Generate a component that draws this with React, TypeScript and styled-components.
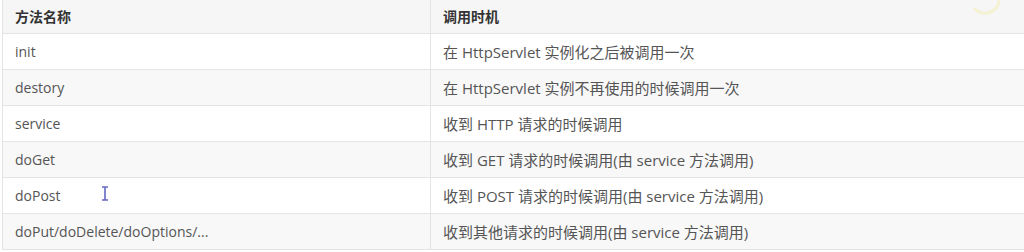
import React from 'react';
import styled, { createGlobalStyle } from 'styled-components';

const GlobalStyle = createGlobalStyle`
  html, body {
    margin: 0;
    padding: 0;
    background: #ffffff;
    overflow: hidden;
  }
`;

const rows = [
  { name: 'init', when: '在 HttpServlet 实例化之后被调用一次' },
  { name: 'destory', when: '在 HttpServlet 实例不再使用的时候调用一次' },
  { name: 'service', when: '收到 HTTP 请求的时候调用' },
  { name: 'doGet', when: '收到 GET 请求的时候调用(由 service 方法调用)' },
  { name: 'doPost', when: '收到 POST 请求的时候调用(由 service 方法调用)' },
  { name: 'doPut/doDelete/doOptions/...', when: '收到其他请求的时候调用(由 service 方法调用)' },
];

const Page = styled.div`
  position: relative;
  width: 1024px;
  height: 252px;
  overflow: hidden;
  padding-left: 2px;
  box-sizing: border-box;
  font-family: "Open Sans", "Noto Sans", "Noto Sans CJK SC", sans-serif;
`;

const Table = styled.table`
  width: 1040px;
  border-collapse: collapse;
  table-layout: fixed;
  font-size: 14px;
  color: #555555;
`;

const HeadCell = styled.th`
  height: 33px;
  padding: 0 12px;
  text-align: left;
  font-weight: 700;
  color: #333333;
  background: #f6f6f6;
  border: 1px solid #e4e4e4;
  border-top: none;
  box-sizing: border-box;
`;

const Row = styled.tr<{ $striped: boolean }>`
  background: ${({ $striped }) => ($striped ? '#f8f8f8' : '#ffffff')};
`;

const Cell = styled.td<{ $wide?: boolean }>`
  height: 36px;
  padding: 0 12px;
  border: 1px solid #e4e4e4;
  box-sizing: border-box;
  white-space: nowrap;
  font-size: ${({ $wide }) => ($wide ? '15px' : '14px')};
`;

const Watermark = styled.svg`
  position: absolute;
  top: -14px;
  right: 8px;
  opacity: 0.5;
`;

// text cursor left over in the doPost row
const Caret = styled.svg`
  position: absolute;
  left: 101px;
  top: 186px;
`;

const App = () => (
  <Page>
    <GlobalStyle />
    <Table>
      <colgroup>
        <col style={{ width: 428 }} />
        <col />
      </colgroup>
      <thead>
        <tr>
          <HeadCell>方法名称</HeadCell>
          <HeadCell>调用时机</HeadCell>
        </tr>
      </thead>
      <tbody>
        {rows.map((row, i) => (
          <Row key={row.name} $striped={i % 2 === 1}>
            <Cell>{row.name}</Cell>
            <Cell $wide>{row.when}</Cell>
          </Row>
        ))}
      </tbody>
    </Table>
    <Watermark width="50" height="40" viewBox="0 0 50 40">
      <path d="M30 4 A 14 14 0 1 1 8 22" fill="none" stroke="#f3f0b0" strokeWidth="3" />
    </Watermark>
    <Caret width="8" height="15" viewBox="0 0 8 15">
      <path d="M1 1 H7 M4 1 V14 M1 14 H7" fill="none" stroke="#6468c4" strokeWidth="1.6" />
    </Caret>
  </Page>
);

export default App;
